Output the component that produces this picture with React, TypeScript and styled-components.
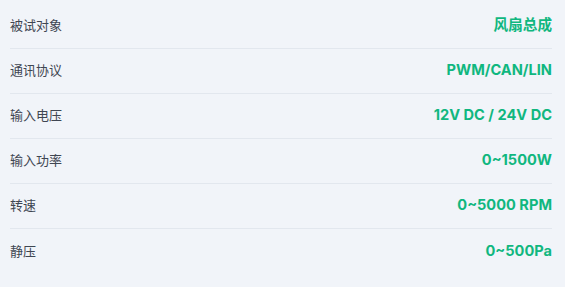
import styled, { createGlobalStyle } from "styled-components";

const GlobalStyle = createGlobalStyle`
  html, body {
    margin: 0;
    padding: 0;
    background: #f1f4f9;
  }
  body {
    font-family: Inter, "Noto Sans CJK SC", sans-serif;
  }
`;

const Spec = styled.div`
  padding: 4px 13px 14px 10px;
  display: flex;
  flex-direction: column;
`;

const Row = styled.div`
  box-sizing: border-box;
  height: 45px;
  padding-bottom: 2px;
  display: flex;
  align-items: center;
  justify-content: space-between;
  border-bottom: 1px solid #e2e7ee;

  &:last-child {
    border-bottom: none;
  }
`;

const Label = styled.span`
  font-size: 13px;
  line-height: 18px;
  color: #3f4652;
`;

const Value = styled.span`
  font-size: 14.6px;
  line-height: 18px;
  font-weight: 700;
  color: #10b77f;
`;

const specs = [
  ["被试对象", "风扇总成"],
  ["通讯协议", "PWM/CAN/LIN"],
  ["输入电压", "12V DC / 24V DC"],
  ["输入功率", "0~1500W"],
  ["转速", "0~5000 RPM"],
  ["静压", "0~500Pa"],
];

const App = () => {
  return (
    <>
      <GlobalStyle />
      <Spec>
        {specs.map(([k, v]) => (
          <Row key={k}>
            <Label>{k}</Label>
            <Value>{v}</Value>
          </Row>
        ))}
      </Spec>
    </>
  );
};

export default App;
